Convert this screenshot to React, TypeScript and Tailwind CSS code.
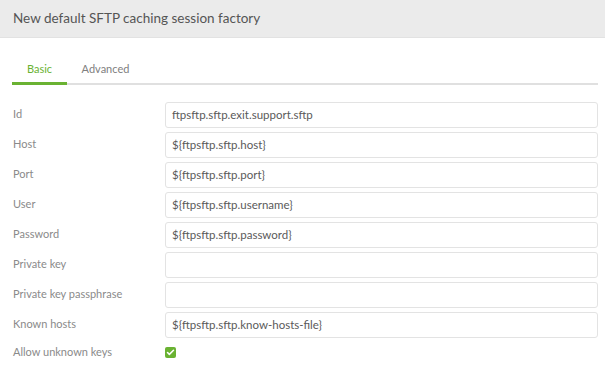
import { Check } from 'lucide-react';

const fields = [
  { label: 'Id', value: 'ftpsftp.sftp.exit.support.sftp' },
  { label: 'Host', value: '${ftpsftp.sftp.host}' },
  { label: 'Port', value: '${ftpsftp.sftp.port}' },
  { label: 'User', value: '${ftpsftp.sftp.username}' },
  { label: 'Password', value: '${ftpsftp.sftp.password}' },
  { label: 'Private key', value: '' },
  { label: 'Private key passphrase', value: '' },
  { label: 'Known hosts', value: '${ftpsftp.sftp.know-hosts-file}' },
];

export default function App() {
  return (
    <div className="h-[370px] w-[605px] bg-white font-['Lato',sans-serif]">
      <div className="flex h-[38px] items-center border-b border-[#e2e2e2] bg-[#ebebeb] px-[13px]">
        <h2 className="text-[13.5px] text-[#555]">New default SFTP caching session factory</h2>
      </div>

      <div className="px-[12px] pr-[7px]">
        <div className="mt-[23px] flex border-b-2 border-[#e0e0e0] text-[11px]">
          <div className="-mb-[2px] w-[55px] border-b-[3px] border-[#6ab232] pb-[4px] text-center text-[#6ab232]">
            Basic
          </div>
          <div className="w-[77px] pb-[5px] text-center text-[#808080]">Advanced</div>
        </div>

        <div className="mt-[17px] flex flex-col gap-[4px]">
          {fields.map((f) => (
            <div key={f.label} className="flex items-center">
              <label className="w-[153px] pl-[1px] text-[11px] text-[#8a8a8a]">{f.label}</label>
              <div className="flex h-[26px] flex-1 items-center rounded-[3px] border border-[#e3e3e3] px-[6px] text-[11.5px] text-[#5a5a5a]">
                {f.value}
              </div>
            </div>
          ))}
          <div className="flex h-[22px] items-center">
            <label className="w-[153px] pl-[1px] text-[11px] text-[#8a8a8a]">Allow unknown keys</label>
            <span className="flex h-[11px] w-[11px] items-center justify-center rounded-[2px] bg-[#6ab232]">
              <Check className="h-[9px] w-[9px] text-white" strokeWidth={4} />
            </span>
          </div>
        </div>
      </div>
    </div>
  );
}
